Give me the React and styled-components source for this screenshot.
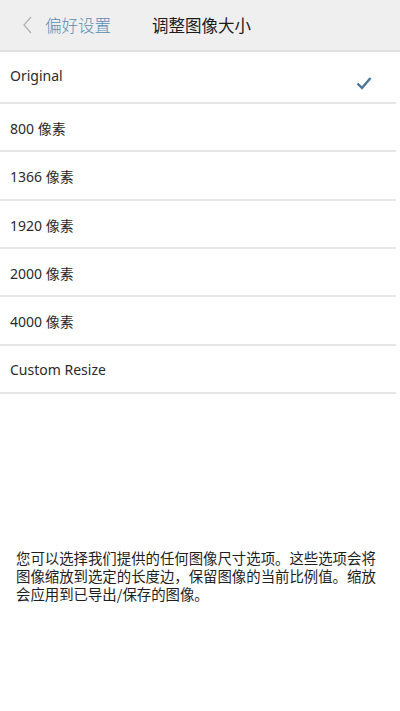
import React from "react";
import styled, { createGlobalStyle } from "styled-components";

const GlobalStyle = createGlobalStyle`
  html, body {
    margin: 0;
    padding: 0;
    background: #fff;
  }
  body {
    font-family: "Noto Sans", "Noto Sans CJK SC", sans-serif;
    color: #222;
  }
`;

const Page = styled.div`
  width: 400px;
  min-height: 711px;
  background: #fff;
  display: flex;
  flex-direction: column;
`;

const Header = styled.div`
  flex-shrink: 0;
  height: 50px;
  background: #efefef;
  border-bottom: 2px solid #e2e2e2;
  display: flex;
  align-items: center;
  padding-left: 22px;
`;

const BackButton = styled.div`
  display: flex;
  align-items: center;
  gap: 13px;
  color: #5a8db3;
  font-size: 16.5px;
  font-family: "Noto Sans CJK SC", sans-serif;
  font-weight: 300;
`;

const Title = styled.div`
  margin-left: 41px;
  font-size: 16.5px;
  font-family: "Noto Sans CJK SC", sans-serif;
  color: #1c1c1c;
`;

const List = styled.div`
  display: flex;
  flex-direction: column;
`;

const Row = styled.div`
  flex-shrink: 0;
  box-sizing: border-box;
  height: ${(p) => (p.$first ? "52px" : "48.33px")};
  width: calc(100% - 4px);
  border-bottom: 2px solid #e6e6e6;
  display: flex;
  align-items: center;
  justify-content: space-between;
  padding: 0 24px 0 10px;
  font-size: 14px;
  color: #2a2a2a;
`;

const Label = styled.span`
  font-family: "Noto Sans", "Noto Sans CJK SC", sans-serif;
  font-weight: 400;
  margin-top: ${(p) => (p.$first ? "-4px" : "2px")};
`;

const Check = styled.svg`
  width: 16px;
  height: 14px;
  margin-top: 12px;
`;

const Note = styled.p`
  margin: 155px 0 0;
  padding: 0 18px 0 16px;
  font-family: "Noto Sans CJK SC", sans-serif;
  font-size: 14.4px;
  line-height: 18px;
  color: #1e1e1e;
`;

const options = ["Original", "800 像素", "1366 像素", "1920 像素", "2000 像素", "4000 像素", "Custom Resize"];

export default function App() {
  return (
    <Page>
      <GlobalStyle />
      <Header>
        <BackButton>
          <svg width="10" height="18" viewBox="0 0 10 18">
            <path d="M9 1 L2 9 L9 17" fill="none" stroke="#b3b3b3" strokeWidth="1.3" />
          </svg>
          偏好设置
        </BackButton>
        <Title>调整图像大小</Title>
      </Header>
      <List>
        {options.map((opt, i) => (
          <Row key={opt} $first={i === 0}>
            <Label $first={i === 0}>{opt}</Label>
            {i === 0 && (
              <Check viewBox="0 0 16 14">
                <path d="M1.5 7.5 L6 12 L14.5 2" fill="none" stroke="#4a7896" strokeWidth="2.4" />
              </Check>
            )}
          </Row>
        ))}
      </List>
      <Note>
        您可以选择我们提供的任何图像尺寸选项。这些选项会将图像缩放到选定的长度边，保留图像的当前比例值。缩放会应用到已导出/保存的图像。
      </Note>
    </Page>
  );
}
